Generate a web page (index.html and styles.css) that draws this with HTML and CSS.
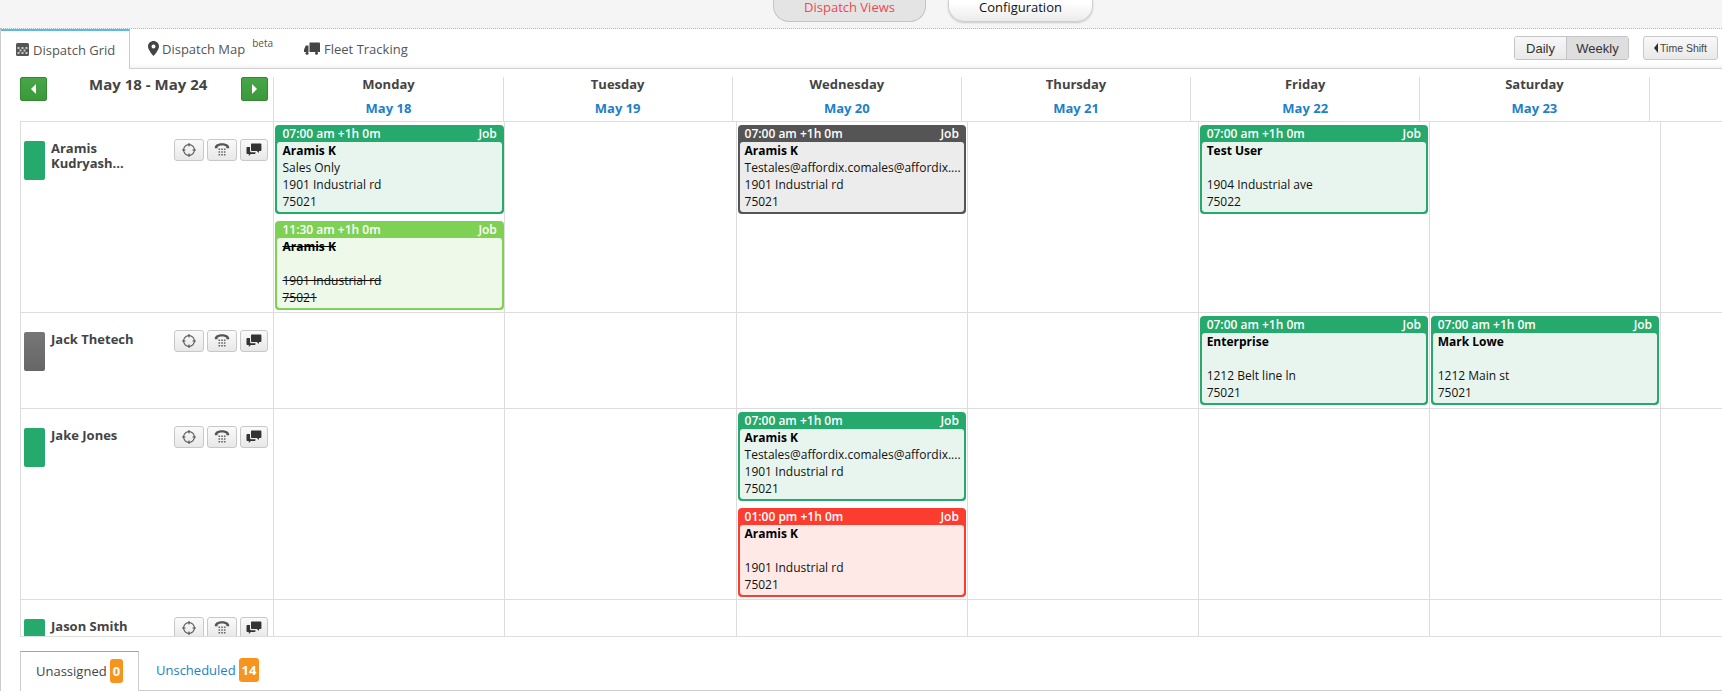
FILE: index.html
```html
<!DOCTYPE html>
<html lang="en">
<head>
<meta charset="utf-8">
<title>Dispatch Grid</title>
<link rel="stylesheet" href="styles.css">
</head>
<body>
<svg class="defs" width="0" height="0" aria-hidden="true">
  <symbol id="i-target" viewBox="0 0 14 14">
    <circle cx="7" cy="7" r="5.4" fill="none" stroke="#555" stroke-width="1.1"/>
    <path d="M7 0V3.500M7 10.500V14M0 7H3.500M10.500 7H14" stroke="#555" stroke-width="1.1" fill="none"/>
  </symbol>
  <symbol id="i-phone" viewBox="0 0 16 16">
    <path d="M0.800 5.400C0.800 2.800 4 1.200 8 1.200s7.200 1.600 7.200 4.200V6.200H12.400V4.700C11.200 3.900 9.600 3.500 8 3.500s-3.200 .4-4.400 1.200V6.200H0.800Z" fill="#555"/>
    <path d="M4.500 6.500h1.600V8H4.500ZM7.200 6.500h1.600V8H7.200ZM9.900 6.500h1.600V8H9.900ZM4.500 9.200h1.600v1.500H4.500ZM7.200 9.200h1.600v1.500H7.200ZM9.900 9.200h1.600v1.500H9.900ZM4.500 11.900h1.600v1.500H4.500ZM7.200 11.900h1.600v1.500H7.200ZM9.900 11.900h1.600v1.500H9.900Z" fill="#666"/>
  </symbol>
  <symbol id="i-chat" viewBox="0 0 16 14">
    <path d="M6 0.500h8.400c.6 0 1 .4 1 1v5.400c0 .6-.4 1-1 1H13v2L10.800 7.900H6c-.6 0-1-.4-1-1V1.500c0-.6 .4-1 1-1Z" fill="#333"/>
    <path d="M1.500 3.900H4V7.700c0 1 .7 1.600 1.600 1.600H9.500V9.900c0 .6-.4 1-1 1H4.800L2.800 12.900V10.900H1.500c-.6 0-1-.4-1-1V4.900c0-.6 .4-1 1-1Z" fill="#333"/>
  </symbol>
</svg>

<header class="topbar">
  <a class="pill pill-active">Dispatch Views</a>
  <a class="pill">Configuration</a>
</header>

<main class="shell">
  <nav class="tabs">
    <a class="tab tab-active">
      <svg class="ico-grid" viewBox="0 0 13 13" width="13" height="13">
        <rect width="13" height="13" rx="1.500" fill="#555"/>
        <path d="M1.500 4h2v2h-2ZM5.500 4h2v2h-2ZM9.500 4h2v2h-2ZM3.500 6.500h2v2h-2ZM7.500 6.500h2v2h-2ZM1.500 9h2v2h-2ZM5.500 9h2v2h-2ZM9.500 9h2v2h-2Z" fill="#ccc"/>
      </svg>
      Dispatch Grid
    </a>
    <a class="tab tab-map">
      <svg viewBox="0 0 11 15" width="11" height="15">
        <path fill-rule="evenodd" d="M5.500 0C2.500 0 0 2.400 0 5.400 0 9 5.500 15 5.500 15S11 9 11 5.400C11 2.400 8.500 0 5.500 0ZM5.500 3.400a2 2 0 1 1 0 4 2 2 0 0 1 0-4Z" fill="#444"/>
      </svg>
      Dispatch Map <sup class="beta">beta</sup>
    </a>
    <a class="tab tab-fleet">
      <svg viewBox="0 0 16 13" width="16" height="13">
        <path d="M5.500 0.500h9.500c.5 0 1 .5 1 1V10H5.500Z" fill="#444"/>
        <path d="M4.500 3.500V10H0V7.500L1.800 3.500Z" fill="#444"/>
        <circle cx="3" cy="11.200" r="1.500" fill="#444"/><circle cx="12.500" cy="11.200" r="1.500" fill="#444"/>
      </svg>
      Fleet Tracking
    </a>
    <div class="tools">
      <div class="segment">
        <button class="seg">Daily</button>
        <button class="seg seg-on">Weekly</button>
      </div>
      <button class="shift"><span class="tri-left"></span>Time Shift</button>
    </div>
  </nav>

  <section class="board">
    <div class="head">
      <div class="head-left">
        <button class="arrow"><span class="arrow-l"></span></button>
        <h1 class="range">May 18 - May 24</h1>
        <button class="arrow"><span class="arrow-r"></span></button>
      </div>
      <div class="day"><b>Monday</b><a>May 18</a></div>
      <div class="day"><b>Tuesday</b><a>May 19</a></div>
      <div class="day"><b>Wednesday</b><a>May 20</a></div>
      <div class="day"><b>Thursday</b><a>May 21</a></div>
      <div class="day"><b>Friday</b><a>May 22</a></div>
      <div class="day"><b>Saturday</b><a>May 23</a></div>
      <div class="day day-last"></div>
    </div>

    <div class="rows">
      <div class="row row-tall">
        <div class="tech">
          <span class="swatch sw-green"></span>
          <span class="name">Aramis Kudryash...</span>
          <div class="acts">
            <button class="act"><svg width="14" height="14"><use href="#i-target"/></svg></button>
            <button class="act"><svg width="16" height="16"><use href="#i-phone"/></svg></button>
            <button class="act"><svg width="16" height="14"><use href="#i-chat"/></svg></button>
          </div>
        </div>
        <div class="cell">
          <article class="card c-green">
            <div class="card-h"><span>07:00 am +1h 0m</span><span>Job</span></div>
            <div class="card-b"><strong>Aramis K</strong><p>Sales Only</p><p>1901 Industrial rd</p><p>75021</p></div>
          </article>
          <article class="card c-lime c-done">
            <div class="card-h"><span>11:30 am +1h 0m</span><span>Job</span></div>
            <div class="card-b"><strong>Aramis K</strong><p></p><p>1901 Industrial rd</p><p>75021</p></div>
          </article>
        </div>
        <div class="cell"></div>
        <div class="cell">
          <article class="card c-grey">
            <div class="card-h"><span>07:00 am +1h 0m</span><span>Job</span></div>
            <div class="card-b"><strong>Aramis K</strong><p>Testales@affordix.comales@affordix....</p><p>1901 Industrial rd</p><p>75021</p></div>
          </article>
        </div>
        <div class="cell"></div>
        <div class="cell">
          <article class="card c-green">
            <div class="card-h"><span>07:00 am +1h 0m</span><span>Job</span></div>
            <div class="card-b"><strong>Test User</strong><p></p><p>1904 Industrial ave</p><p>75022</p></div>
          </article>
        </div>
        <div class="cell"></div>
        <div class="cell cell-end"></div>
      </div>

      <div class="row row-short">
        <div class="tech">
          <span class="swatch sw-grey"></span>
          <span class="name">Jack Thetech</span>
          <div class="acts">
            <button class="act"><svg width="14" height="14"><use href="#i-target"/></svg></button>
            <button class="act"><svg width="16" height="16"><use href="#i-phone"/></svg></button>
            <button class="act"><svg width="16" height="14"><use href="#i-chat"/></svg></button>
          </div>
        </div>
        <div class="cell"></div>
        <div class="cell"></div>
        <div class="cell"></div>
        <div class="cell"></div>
        <div class="cell">
          <article class="card c-green">
            <div class="card-h"><span>07:00 am +1h 0m</span><span>Job</span></div>
            <div class="card-b"><strong>Enterprise</strong><p></p><p>1212 Belt line ln</p><p>75021</p></div>
          </article>
        </div>
        <div class="cell">
          <article class="card c-green">
            <div class="card-h"><span>07:00 am +1h 0m</span><span>Job</span></div>
            <div class="card-b"><strong>Mark Lowe</strong><p></p><p>1212 Main st</p><p>75021</p></div>
          </article>
        </div>
        <div class="cell cell-end"></div>
      </div>

      <div class="row row-tall">
        <div class="tech">
          <span class="swatch sw-green"></span>
          <span class="name">Jake Jones</span>
          <div class="acts">
            <button class="act"><svg width="14" height="14"><use href="#i-target"/></svg></button>
            <button class="act"><svg width="16" height="16"><use href="#i-phone"/></svg></button>
            <button class="act"><svg width="16" height="14"><use href="#i-chat"/></svg></button>
          </div>
        </div>
        <div class="cell"></div>
        <div class="cell"></div>
        <div class="cell">
          <article class="card c-green">
            <div class="card-h"><span>07:00 am +1h 0m</span><span>Job</span></div>
            <div class="card-b"><strong>Aramis K</strong><p>Testales@affordix.comales@affordix....</p><p>1901 Industrial rd</p><p>75021</p></div>
          </article>
          <article class="card c-red">
            <div class="card-h"><span>01:00 pm +1h 0m</span><span>Job</span></div>
            <div class="card-b"><strong>Aramis K</strong><p></p><p>1901 Industrial rd</p><p>75021</p></div>
          </article>
        </div>
        <div class="cell"></div>
        <div class="cell"></div>
        <div class="cell"></div>
        <div class="cell cell-end"></div>
      </div>

      <div class="row row-short">
        <div class="tech">
          <span class="swatch sw-green"></span>
          <span class="name">Jason Smith</span>
          <div class="acts">
            <button class="act"><svg width="14" height="14"><use href="#i-target"/></svg></button>
            <button class="act"><svg width="16" height="16"><use href="#i-phone"/></svg></button>
            <button class="act"><svg width="16" height="14"><use href="#i-chat"/></svg></button>
          </div>
        </div>
        <div class="cell"></div>
        <div class="cell"></div>
        <div class="cell"></div>
        <div class="cell"></div>
        <div class="cell"></div>
        <div class="cell"></div>
        <div class="cell cell-end"></div>
      </div>
    </div>
  </section>

  <nav class="bottom-tabs">
    <a class="btab btab-active">Unassigned <span class="badge">0</span></a>
    <a class="btab">Unscheduled <span class="badge">14</span></a>
  </nav>
</main>
</body>
</html>
```
FILE: styles.css
```css
* { box-sizing: border-box; }
html, body { margin: 0; padding: 0; }
body {
  width: 1722px;
  height: 691px;
  overflow: hidden;
  background: #fff;
  font-family: "Open Sans", "Liberation Sans", sans-serif;
  font-size: 13px;
  color: #444;
}
.defs { position: absolute; }

/* top bar */
.topbar {
  display: flex;
  justify-content: center;
  gap: 22px;
  height: 29px;
  padding-left: 144px;
  background: #f5f5f5;
  border-bottom: 1px dotted #b5b5b5;
}
.pill {
  display: block;
  width: 145px;
  height: 22px;
  text-align: center;
  line-height: 14px;
  color: #111;
  border: 1px solid #cfcfcf;
  border-top: 0;
  border-radius: 0 0 16px 16px;
  background: linear-gradient(#fff 10%, #ececec);
  box-shadow: 0 1px 2px rgba(0,0,0,.18);
}
.pill-active {
  width: 153px;
  color: #f2474f;
  background: #e4e4e4;
  border-color: #c4c4c4;
  box-shadow: none;
}

/* shell */
.shell { border-left: 1px solid #ccc; height: 662px; }

.tabs {
  display: flex;
  height: 40px;
  border-bottom: 1px solid #d2d2d2;
  box-shadow: inset 0 -5px 4px -3px #f1f1f1;
}
.tab {
  display: flex;
  align-items: center;
  gap: 4px;
  height: 39px;
  padding: 1px 15px 0 0;
  color: #555;
  white-space: nowrap;
}
.tab-active {
  width: 129px;
  height: 40px;
  padding: 0 0 1px 15px;
  background: #fff;
  border-top: 2px solid #5bb8e8;
  border-right: 1px solid #ccc;
}
.tab-map { gap: 3px; margin-left: 18px; }
.tab-map svg { margin-top: -2px; }
.tab-fleet { margin-left: 16px; }
.tab-fleet svg { margin-top: -2px; }
.ico-grid { flex: none; }
.beta {
  align-self: flex-start;
  margin: 7px 0 0 4px;
  font-size: 10px;
  line-height: 12px;
  color: #555;
}
.tools {
  display: flex;
  gap: 14px;
  margin-left: auto;
  padding: 7px 4px 0 0;
  height: 31px;
}
.segment {
  display: flex;
  height: 24px;
  border: 1px solid #c4c4c4;
  border-radius: 3px;
  overflow: hidden;
}
.seg, .shift {
  font-family: "Liberation Sans", Arial, sans-serif;
  border: 0;
  padding: 0;
  color: #333;
}
.seg {
  width: 51px;
  font-size: 13px;
  background: linear-gradient(#f7f7f7, #e9e9e9);
}
.seg-on {
  width: 62px;
  background: #dedede;
  border-left: 1px solid #c4c4c4;
}
.shift {
  display: flex;
  align-items: center;
  justify-content: center;
  gap: 2px;
  width: 75px;
  height: 24px;
  font-size: 10.5px;
  color: #444;
  border: 1px solid #c8c8c8;
  border-radius: 3px;
  background: linear-gradient(#f9f9f9, #e9e9e9);
}
.tri-left {
  width: 0;
  height: 0;
  border: 5px solid transparent;
  border-left-width: 0;
  border-right: 4px solid #333;
}

/* board */
.board { margin-left: 19px; }
.head {
  display: flex;
  height: 53px;
  padding-top: 8px;
  border-bottom: 1px solid #ddd;
}
.head-left {
  display: flex;
  flex: none;
  width: 253.4px;
  padding-right: 5px;
}
.arrow {
  display: flex;
  align-items: center;
  justify-content: center;
  flex: none;
  width: 27px;
  height: 24px;
  padding: 0;
  background: linear-gradient(#47a647, #3b983b);
  border: 1px solid #2f8a30;
  border-radius: 2px;
}
.arrow-l, .arrow-r {
  width: 0;
  height: 0;
  border: 5px solid transparent;
}
.arrow-l { border-left-width: 0; border-right: 5px solid #fff; }
.arrow-r { border-right-width: 0; border-left: 5px solid #fff; }
.range {
  flex: 1;
  margin: 0;
  padding-left: 8px;
  text-align: center;
  font-size: 15px;
  line-height: 14px;
  font-weight: 700;
  color: #444;
}
.day {
  display: flex;
  flex-direction: column;
  align-items: center;
  flex: none;
  width: 229.2px;
  border-left: 1px solid #ddd;
  line-height: 15px;
}
.day b { font-weight: 700; color: #444; }
.day a { margin-top: 9px; font-weight: 700; color: #1d80c8; }
.day-last { width: 0; flex: 1; }

.rows {
  height: 515px;
  overflow: hidden;
  border-bottom: 1px solid #ddd;
}
.row {
  display: grid;
  grid-template-columns: 254.45px repeat(6, 231.05px) 1fr;
  border-bottom: 1px solid #ddd;
}
.row-tall { height: 191px; }
.row-short { height: 96px; }
.tech {
  display: flex;
  align-items: flex-start;
  padding: 17px 5px 0 3px;
  border-left: 1px solid #ddd;
  border-right: 1px solid #ddd;
}
.swatch {
  flex: none;
  width: 21px;
  height: 39px;
  margin: 2px 6px 0 0;
  border-radius: 2px;
}
.sw-green { background: #26a96c; }
.sw-grey { background: linear-gradient(#777, #666); }
.name {
  width: 100px;
  margin-top: 2px;
  font-weight: 700;
  line-height: 15px;
  color: #444;
}
.acts {
  display: flex;
  gap: 3px;
  margin-left: auto;
}
.act {
  display: flex;
  align-items: center;
  justify-content: center;
  width: 30px;
  height: 22px;
  padding: 0;
  background: linear-gradient(#fafafa, #e8e8e8);
  border: 1px solid #c8c8c8;
  border-radius: 3px;
}
.act:last-child { width: 28px; }
.cell {
  display: flex;
  flex-direction: column;
  gap: 7px;
  padding: 3px 1px 0;
  border-right: 1px solid #ddd;
}
.cell-end { border-right: 0; }
.card {
  flex: none;
  width: 228.4px;
  height: 89px;
  border: 2px solid;
  border-radius: 4px;
  overflow: hidden;
  font-size: 12px;
  line-height: 17px;
  color: #111;
}
.card-h {
  display: flex;
  justify-content: space-between;
  height: 15px;
  padding: 0 5px;
  line-height: 14px;
  font-weight: 600;
  color: #fff;
}
.card-b {
  height: 70px;
  padding: 0 0 0 5px;
  border-radius: 3px;
  white-space: nowrap;
}
.card-b strong { display: block; height: 17px; font-weight: 700; color: #000; }
.card-b p { height: 17px; margin: 0; }
.c-done .card-b strong, .c-done .card-b p { text-decoration: line-through; }
.c-green { border-color: #26a96c; background: #26a96c; }
.c-green .card-b { background: #e8f5ee; }
.c-lime { border-color: #7fd155; background: #7fd155; }
.c-lime .card-b { background: #eff9ea; }
.c-grey { border-color: #555; background: #555; }
.c-grey .card-b { background: #ececec; }
.c-red { border-color: #fb3c2e; background: #fb3c2e; }
.c-red .card-b { background: #ffe9e7; }

/* bottom */
.bottom-tabs {
  display: flex;
  height: 40px;
  margin: 14px 0 0 19px;
  border-bottom: 1px solid #ccc;
}
.btab {
  display: flex;
  align-items: center;
  gap: 3px;
  height: 39px;
  margin-left: 17px;
  padding-bottom: 2px;
  color: #1d80c8;
  white-space: nowrap;
}
.btab-active {
  width: 119px;
  height: 40px;
  margin-left: 0;
  padding-left: 15px;
  color: #444;
  background: #fff;
  border: 1px solid #ccc;
  border-top-color: #5bb8e8;
  border-bottom: 0;
}
.badge {
  display: block;
  height: 24px;
  padding: 0 3px;
  line-height: 24px;
  font-weight: 700;
  color: #fff;
  background: #f7941e;
  border-radius: 3px;
}
```
